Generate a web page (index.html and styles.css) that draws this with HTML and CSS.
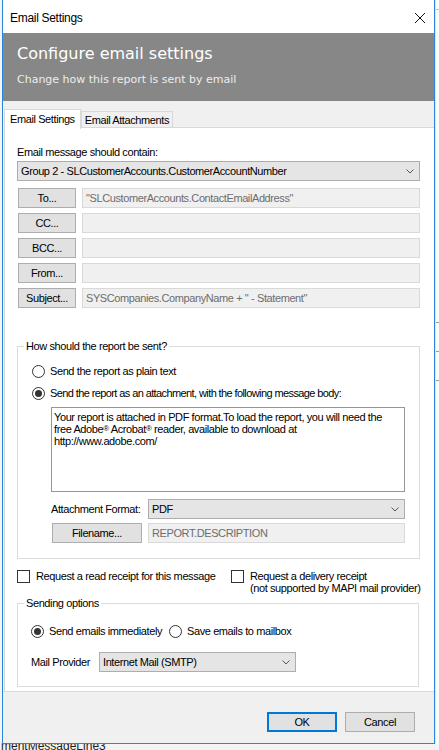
FILE: index.html
```html
<!DOCTYPE html>
<html lang="en">
<head>
    <meta charset="UTF-8">
    <title>Email Settings</title>
    <link rel="stylesheet" href="styles.css">
</head>
<body>
    <div class="screen">
        <div class="dialog">
            <div class="titlebar">
                <span>Email Settings</span>
                <svg class="close" viewBox="0 0 10 10" width="10" height="10"><path d="M0 0L10 10M10 0L0 10" stroke="#111" stroke-width="1" fill="none"/></svg>
            </div>

            <div class="banner">
                <h1>Configure email settings</h1>
                <p>Change how this report is sent by email</p>
            </div>

            <div class="tabs">
                <div class="tab active">Email Settings</div>
                <div class="tab">Email Attachments</div>
            </div>

            <div class="page">
                <div class="lead">Email message should contain:</div>
                <div class="select wide">
                    <span>Group 2 - SLCustomerAccounts.CustomerAccountNumber</span>
                    <svg class="chev" viewBox="0 0 8 5" width="8" height="5"><path d="M0.5 0.5L4 4L7.5 0.5" stroke="#555" fill="none"/></svg>
                </div>

                <div class="addr">
                    <div class="addr-row"><div class="btn">To...</div><div class="field">"SLCustomerAccounts.ContactEmailAddress"</div></div>
                    <div class="addr-row"><div class="btn">CC...</div><div class="field"></div></div>
                    <div class="addr-row"><div class="btn">BCC...</div><div class="field"></div></div>
                    <div class="addr-row"><div class="btn">From...</div><div class="field"></div></div>
                    <div class="addr-row"><div class="btn">Subject...</div><div class="field">SYSCompanies.CompanyName + " - Statement"</div></div>
                </div>

                <fieldset class="group send-how">
                    <legend>How should the report be sent?</legend>
                    <div class="inner">
                        <div class="opt"><span class="radio"></span>Send the report as plain text</div>
                        <div class="opt second"><span class="radio on"></span>Send the report as an attachment, with the following message body:</div>
                        <div class="memo">Your report is attached in PDF format.To load the report, you will need the<br>free Adobe<span class="reg">®</span> Acrobat<span class="reg">®</span> reader, available to download at<br>http://www.adobe.com/</div>
                        <div class="att-row">
                            <span class="att-label">Attachment Format:</span>
                            <div class="select att-select">
                                <span>PDF</span>
                                <svg class="chev" viewBox="0 0 8 5" width="8" height="5"><path d="M0.5 0.5L4 4L7.5 0.5" stroke="#555" fill="none"/></svg>
                            </div>
                        </div>
                        <div class="att-row file-row">
                            <div class="btn file-btn">Filename...</div>
                            <div class="field att-field">REPORT.DESCRIPTION</div>
                        </div>
                    </div>
                </fieldset>

                <div class="checks">
                    <div class="check first"><span class="box"></span>Request a read receipt for this message</div>
                    <div class="check"><span class="box"></span><span>Request a delivery receipt<br>(not supported by MAPI mail provider)</span></div>
                </div>

                <fieldset class="group sending">
                    <legend>Sending options</legend>
                    <div class="inner">
                        <div class="opts-line">
                            <div class="opt now"><span class="radio on"></span>Send emails immediately</div>
                            <div class="opt"><span class="radio"></span>Save emails to mailbox</div>
                        </div>
                        <div class="provider">
                            <span class="prov-label">Mail Provider</span>
                            <div class="select prov-select">
                                <span>Internet Mail (SMTP)</span>
                                <svg class="chev" viewBox="0 0 8 5" width="8" height="5"><path d="M0.5 0.5L4 4L7.5 0.5" stroke="#555" fill="none"/></svg>
                            </div>
                        </div>
                    </div>
                </fieldset>
            </div>

            <div class="footer">
                <div class="btn action default">OK</div>
                <div class="btn action">Cancel</div>
            </div>
        </div>

        <div class="strip">
            <div class="strip-line top"></div>
            <div class="strip-line mid"></div>
            <div class="strip-line"></div>
            <div class="strip-line"></div>
        </div>
    </div>
    <div class="behind">mentMessageLine3</div>
</body>
</html>
```

FILE: styles.css
```css
* { box-sizing: border-box; }
body { margin: 0; width: 439px; height: 750px; overflow: hidden; background: #f4f4f4; font-family: "Liberation Sans", Arial, sans-serif; font-size: 11px; letter-spacing: -0.4px; color: #000; }

.screen { display: flex; height: 744px; position: relative; z-index: 1; }
.dialog { margin-left: 2px; width: 433px; flex: none; border: 1px solid #2a87d8; border-top: 0; background: #f0f0f0; display: flex; flex-direction: column; }

/* window chrome */
.titlebar { height: 33px; flex: none; background: #fff; display: flex; align-items: center; justify-content: space-between; padding: 3px 9px 0 7px; font-size: 12px; letter-spacing: -0.3px; }
.close { display: block; }

.banner { height: 68px; flex: none; background: #878787; color: #fff; padding: 11px 14px 0; font-family: "DejaVu Sans", sans-serif; letter-spacing: 0; }
.banner h1 { margin: 0; font-size: 16px; font-weight: normal; line-height: 20px; }
.banner p { margin: 9px 0 0; font-size: 11px; line-height: 14px; color: #ededed; }

/* tab strip */
.tabs { display: flex; align-items: flex-end; height: 20px; margin: 7px 0 0 1px; flex: none; }
.tab { height: 17px; padding: 0 3px; border: 1px solid #d9d9d9; border-bottom: 0; line-height: 17px; background: #f0f0f0; }
.tab.active { height: 20px; padding: 0 5px; background: #fff; margin-bottom: -1px; position: relative; z-index: 1; line-height: 18px; }

.page { margin: -1px 0 0 1px; background: #fff; border: 1px solid #d9d9d9; border-right: 0; padding: 18px 14px 4px 12px; flex: none; }

.lead { line-height: 13px; }

/* combo boxes */
.select { height: 20px; border: 1px solid #adadad; background: #e5e5e5; display: flex; align-items: center; justify-content: space-between; padding: 0 5px 0 3px; }
.wide { margin-top: 2px; }
.chev { display: block; flex: none; }

/* address fields */
.addr { margin-top: 7px; display: grid; row-gap: 5px; }
.addr-row { display: flex; height: 20px; }
.btn { background: #e1e1e1; border: 1px solid #adadad; display: flex; align-items: center; justify-content: center; }
.addr-row .btn { width: 58px; margin-left: 1px; margin-right: 6px; }
.field { flex: 1; height: 20px; background: #f0f0f0; border: 1px solid #d9d9d9; color: #6d6d6d; padding-left: 3px; display: flex; align-items: center; white-space: nowrap; overflow: hidden; }

/* group boxes */
.group { border: 1px solid #dcdcdc; margin: 0; min-width: 0; padding: 0 0 15px 6px; }
.group legend { padding: 0 2px; line-height: 13px; }
.send-how { margin-top: 32px; }
.send-how .inner { padding: 10px 0 0 8px; }

.opt { display: flex; align-items: center; height: 16px; white-space: nowrap; }
.opt.second { margin-top: 6px; letter-spacing: -0.6px; }
.radio { width: 13px; height: 13px; border: 1px solid #333; border-radius: 50%; background: #fff; margin-right: 5px; display: flex; align-items: center; justify-content: center; flex: none; }
.radio.on::after { content: ""; width: 7px; height: 7px; border-radius: 50%; background: #333; }

.memo { margin: 6px 0 0 19px; width: 354px; height: 85px; border: 1px solid #969696; padding: 3px 2px; line-height: 12px; white-space: nowrap; }
.reg { font-size: 8px; vertical-align: 2px; }

.att-row { display: flex; align-items: center; height: 20px; margin: 7px 0 0 19px; }
.att-label { width: 97px; }
.att-select { width: 257px; }
.file-row { margin-top: 4px; }
.file-btn { width: 90px; height: 20px; margin: 0 6px 0 1px; }
.att-field { flex: none; width: 257px; }

/* receipts */
.checks { display: flex; margin-top: 11px; line-height: 12px; white-space: nowrap; }
.check { display: flex; align-items: flex-start; }
.check.first { width: 214px; flex: none; }
.box { width: 13px; height: 13px; border: 1px solid #333; background: #fff; margin-right: 6px; flex: none; }

.sending { margin: 3px 1px 0 0; padding-bottom: 14px; }
.sending .inner { padding: 13px 0 0 7px; }
.opts-line { display: flex; }
.now { width: 138px; flex: none; }

.provider { display: flex; align-items: center; height: 20px; margin-top: 13px; }
.prov-label { width: 68px; }
.prov-select { width: 197px; }

/* dialog buttons */
.footer { flex: 1; display: flex; justify-content: flex-end; gap: 8px; padding: 20px 19px 0 0; }
.action { width: 70px; height: 20px; }
.default { border-color: #0078d7; box-shadow: inset 0 0 0 1px #0078d7; }

/* window behind the dialog */
.strip { flex: 1; background: #fbfbfb; border-left: 1px solid #dfe6ee; }
.strip-line { height: 1px; background: #9a9a9a; margin-top: 28px; }
.strip-line.top { background: #b7c3d0; margin-top: 9px; }
.strip-line.mid { margin-top: 312px; }
.behind { margin-top: -2px; padding-left: 1px; font-size: 12px; line-height: 8px; letter-spacing: 0; color: #1d1d1d; white-space: nowrap; }
```
